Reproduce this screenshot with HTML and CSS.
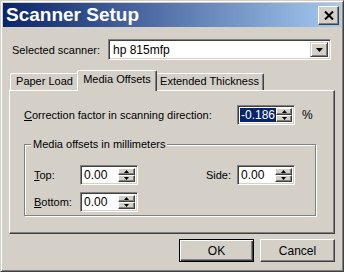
FILE: index.html
```html
<!DOCTYPE html>
<html>
<head>
<meta charset="utf-8">
<link rel="stylesheet" href="styles.css">
</head>
<body>
<div class="win">
  <div class="titlebar">
    <span class="title">Scanner Setup</span>
    <div class="close">
      <svg width="10" height="9" viewBox="0 0 10 9"><path d="M1 0.5 L9 8.5 M9 0.5 L1 8.5" stroke="#000" stroke-width="2" fill="none"/></svg>
    </div>
  </div>
  <div class="client">
    <div class="scanner-row">
      <span class="scanner-label">Selected scanner:</span>
      <div class="combo">
        <span class="combo-val">hp 815mfp</span>
        <span class="combo-btn"><svg width="7" height="4" viewBox="0 0 7 4"><path d="M0 0 H7 L3.5 4 Z" fill="#000"/></svg></span>
      </div>
    </div>
    <div class="tabs">
      <div class="tab tab-paper">Paper Load</div>
      <div class="tab tab-sel">Media Offsets</div>
      <div class="tab tab-ext">Extended Thickness</div>
    </div>
    <div class="panel">
      <div class="corr-row">
        <span class="corr-label"><u>C</u>orrection factor in scanning direction:</span>
        <div class="spin">
          <span class="val"><span class="hl">-0.186</span></span>
          <div class="arrows">
            <span class="arr"><svg width="5" height="3" viewBox="0 0 5 3"><path d="M2.5 0 L5 3 H0 Z" fill="#000"/></svg></span>
            <span class="arr"><svg width="5" height="3" viewBox="0 0 5 3"><path d="M0 0 H5 L2.5 3 Z" fill="#000"/></svg></span>
          </div>
        </div>
        <span class="pct">%</span>
      </div>
      <div class="grp">
        <span class="grp-title">Media offsets in millimeters</span>
        <div class="grp-grid">
          <span class="lbl"><u>T</u>op:</span>
          <div class="spin">
            <span class="val">0.00</span>
            <div class="arrows">
              <span class="arr"><svg width="5" height="3" viewBox="0 0 5 3"><path d="M2.5 0 L5 3 H0 Z" fill="#000"/></svg></span>
              <span class="arr"><svg width="5" height="3" viewBox="0 0 5 3"><path d="M0 0 H5 L2.5 3 Z" fill="#000"/></svg></span>
            </div>
          </div>
          <span></span>
          <span class="lbl side-lbl">Side:</span>
          <div class="spin">
            <span class="val">0.00</span>
            <div class="arrows">
              <span class="arr"><svg width="5" height="3" viewBox="0 0 5 3"><path d="M2.5 0 L5 3 H0 Z" fill="#000"/></svg></span>
              <span class="arr"><svg width="5" height="3" viewBox="0 0 5 3"><path d="M0 0 H5 L2.5 3 Z" fill="#000"/></svg></span>
            </div>
          </div>
          <span class="lbl"><u>B</u>ottom:</span>
          <div class="spin">
            <span class="val">0.00</span>
            <div class="arrows">
              <span class="arr"><svg width="5" height="3" viewBox="0 0 5 3"><path d="M2.5 0 L5 3 H0 Z" fill="#000"/></svg></span>
              <span class="arr"><svg width="5" height="3" viewBox="0 0 5 3"><path d="M0 0 H5 L2.5 3 Z" fill="#000"/></svg></span>
            </div>
          </div>
        </div>
      </div>
    </div>
    <div class="btn-row">
      <button class="btn btn-default">OK</button>
      <button class="btn">Cancel</button>
    </div>
  </div>
</div>
</body>
</html>
```
FILE: styles.css
```css
* { box-sizing: border-box; }
body {
  margin: 0;
  background: #D4D0C8;
  font-family: "Liberation Sans", Arial, sans-serif;
  font-size: 11px;
  color: #000;
}
.win {
  width: 344px;
  height: 272px;
  border: 1px solid;
  border-color: #D4D0C8 #404040 #404040 #D4D0C8;
  box-shadow: inset 1px 1px 0 #fff, inset -1px -1px 0 #808080;
  padding: 2px;
  display: flex;
  flex-direction: column;
  background: #D4D0C8;
}
.titlebar {
  height: 24px;
  flex: 0 0 24px;
  background: linear-gradient(to right, #0A246A, #A6CAF0);
  display: flex;
  align-items: center;
  justify-content: space-between;
  padding: 0 2px 0 3px;
}
.title {
  color: #fff;
  font-weight: bold;
  font-size: 19px;
  line-height: 24px;
}
.close {
  width: 21px;
  height: 19px;
  background: #D4D0C8;
  border: 1px solid;
  border-color: #fff #404040 #404040 #fff;
  box-shadow: inset -1px -1px 0 #808080;
  display: flex;
  align-items: center;
  justify-content: center;
}
.client {
  flex: 1;
  padding: 12px 6px 0 6px;
  display: flex;
  flex-direction: column;
}
.scanner-row {
  display: flex;
  align-items: center;
  height: 21px;
  padding-left: 3px;
}
.scanner-label {
  flex: 0 0 96px;
}
.combo {
  width: 223px;
  height: 21px;
  background: #fff;
  border: 1px solid;
  border-color: #808080 #fff #fff #808080;
  box-shadow: inset 1px 1px 0 #404040, inset -1px -1px 0 #D4D0C8;
  padding: 2px;
  display: flex;
  align-items: stretch;
}
.combo-val {
  flex: 1;
  padding-left: 2px;
  line-height: 17px;
  font-size: 12px;
}
.combo-btn {
  width: 18px;
  background: #D4D0C8;
  border: 1px solid;
  border-color: #D4D0C8 #404040 #404040 #D4D0C8;
  box-shadow: inset 1px 1px 0 #fff, inset -1px -1px 0 #808080;
  display: flex;
  align-items: center;
  justify-content: center;
}
.tabs {
  display: flex;
  align-items: flex-end;
  height: 20px;
  margin-top: 10px;
  padding-left: 1px;
}
.tab {
  height: 17px;
  background: #D4D0C8;
  border: 1px solid;
  border-bottom: none;
  border-color: #fff #404040 transparent #fff;
  border-radius: 2px 2px 0 0;
  box-shadow: inset -1px 0 0 #808080;
  text-align: center;
  line-height: 15px;
  white-space: nowrap;
}
.tab-paper { width: 69px; }
.tab-sel {
  width: 80px;
  height: 21px;
  margin: 0 -2px -1px -2px;
  position: relative;
  z-index: 1;
  line-height: 16px;
}
.tab-ext { width: 109px; }
.panel {
  height: 144px;
  border: 1px solid;
  border-color: #fff #404040 #404040 #fff;
  box-shadow: inset -1px -1px 0 #808080;
  padding: 14px 0 0 14px;
}
.corr-row {
  display: flex;
  align-items: center;
  height: 20px;
}
.corr-label {
  flex: 0 0 213px;
}
.pct {
  margin-left: 7px;
  font-size: 12px;
}
.spin {
  width: 58px;
  height: 20px;
  display: flex;
  background: #fff;
  border: 1px solid;
  border-color: #808080 #fff #fff #808080;
  box-shadow: inset 1px 1px 0 #404040, inset -1px -1px 0 #D4D0C8;
  padding: 2px;
}
.spin .val {
  flex: 1;
  line-height: 16px;
  font-size: 12px;
  padding-left: 1px;
  display: flex;
  align-items: center;
}
.hl {
  background: #0A246A;
  color: #fff;
  line-height: 14px;
  margin-left: -1px;
  padding: 0 1px;
}
.arrows {
  width: 17px;
  display: flex;
  flex-direction: column;
}
.arr {
  flex: 1;
  background: #D4D0C8;
  border: 1px solid;
  border-color: #fff #404040 #404040 #fff;
  box-shadow: inset -1px -1px 0 #808080;
  display: flex;
  align-items: center;
  justify-content: center;
}
.grp {
  width: 292px;
  height: 72px;
  margin-top: 19px;
  border: 1px solid #808080;
  box-shadow: inset 1px 1px 0 #fff, 1px 1px 0 #fff;
  padding: 0 20px 9px 0;
}
.grp-title {
  display: inline-block;
  margin-top: -7px;
  margin-left: 6px;
  padding: 0 2px;
  line-height: 13px;
  background: #D4D0C8;
  vertical-align: top;
}
.grp-grid {
  margin: 8px 0 0 9px;
  display: grid;
  grid-template-columns: 46px 58px 1fr auto 58px;
  grid-template-rows: 20px 20px;
  row-gap: 7px;
  align-items: center;
}
.side-lbl {
  margin-right: 6px;
}
.btn-row {
  display: flex;
  justify-content: flex-end;
  gap: 6px;
  margin-top: 5px;
}
.btn {
  width: 75px;
  height: 23px;
  margin: 0;
  background: #D4D0C8;
  border: 1px solid;
  border-color: #fff #404040 #404040 #fff;
  box-shadow: inset -1px -1px 0 #808080;
  font-family: "Liberation Sans", Arial, sans-serif;
  font-size: 12px;
  color: #000;
  padding: 0;
}
.btn-default {
  border-color: #000;
  box-shadow: inset 1px 1px 0 #fff, inset -1px -1px 0 #404040, inset -2px -2px 0 #808080;
}
```
